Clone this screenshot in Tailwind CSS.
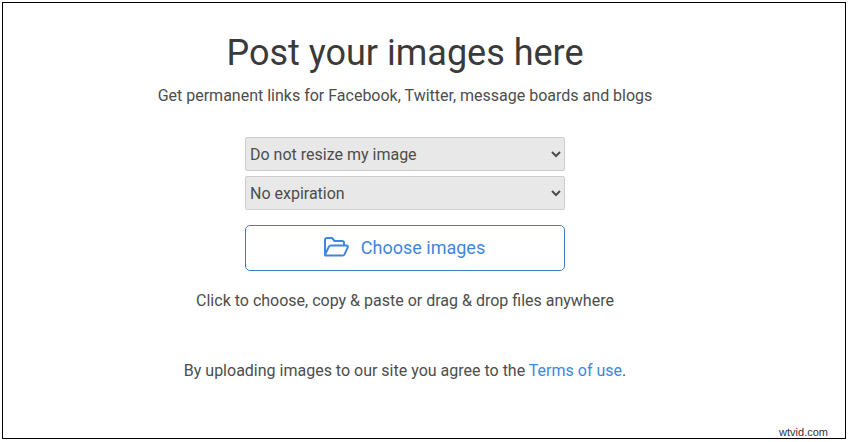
<!DOCTYPE html>
<html lang="en">
<head>
    <meta charset="UTF-8">
    <title>Post your images here</title>
    <script src="https://cdn.jsdelivr.net/npm/@tailwindcss/browser@4"></script>
</head>
<body class="bg-white w-[848px] h-[442px] overflow-hidden font-['Roboto',sans-serif] text-[#4d4d4d]">
    <div class="relative mt-[2px] ml-[2px] w-[844px] h-[437px] border border-black flex flex-col items-center pr-[38px]">
        <h1 class="mt-[28px] text-[36px] leading-[44px] text-[#3a3a3a] font-normal">Post your images here</h1>
        <p class="mt-[9px] text-[16px] leading-[24px]">Get permanent links for Facebook, Twitter, message boards and blogs</p>

        <select class="mt-[29px] w-[320px] h-[34px] bg-[#e8e8e8] border border-[#ccc] rounded-[2px] text-[16px] text-[#4d4d4d]">
            <option>Do not resize my image</option>
        </select>
        <select class="mt-[5px] w-[320px] h-[34px] bg-[#e8e8e8] border border-[#ccc] rounded-[2px] text-[16px] text-[#4d4d4d]">
            <option>No expiration</option>
        </select>

        <button class="mt-[15px] w-[320px] h-[46px] pb-[2px] pr-[2px] flex items-center justify-center gap-[12px] border border-[#3f7fc4] rounded-[5px] text-[18px] text-[#3f86de] bg-white">
            <svg class="w-[26px] h-[20px]" viewBox="0 0 26 20" fill="none" stroke="#3f86de" stroke-width="2" stroke-linejoin="round" stroke-linecap="round">
                <path d="M2 17V3a2 2 0 0 1 2-2h5l2.5 3H19a2 2 0 0 1 2 2v2"/>
                <path d="M2 17.5 6 9.5a2 2 0 0 1 1.8-1H23.5a1.3 1.3 0 0 1 1.2 1.9l-3.2 7a2 2 0 0 1-1.8 1.1H3.5a1.5 1.5 0 0 1-1.5-.5z"/>
            </svg>
            Choose images
        </button>

        <p class="mt-[18px] text-[16px] leading-[24px]">Click to choose, copy &amp; paste or drag &amp; drop files anywhere</p>
        <p class="mt-[46px] text-[16px] leading-[24px]">By uploading images to our site you agree to the <a href="#" class="text-[#3f86de]">Terms of use</a>.</p>

        <span class="absolute right-[17px] bottom-[1px] text-[11px] leading-[10px] text-[#333] font-['Liberation_Sans',sans-serif]">wtvid.com</span>
    </div>
</body>
</html>
